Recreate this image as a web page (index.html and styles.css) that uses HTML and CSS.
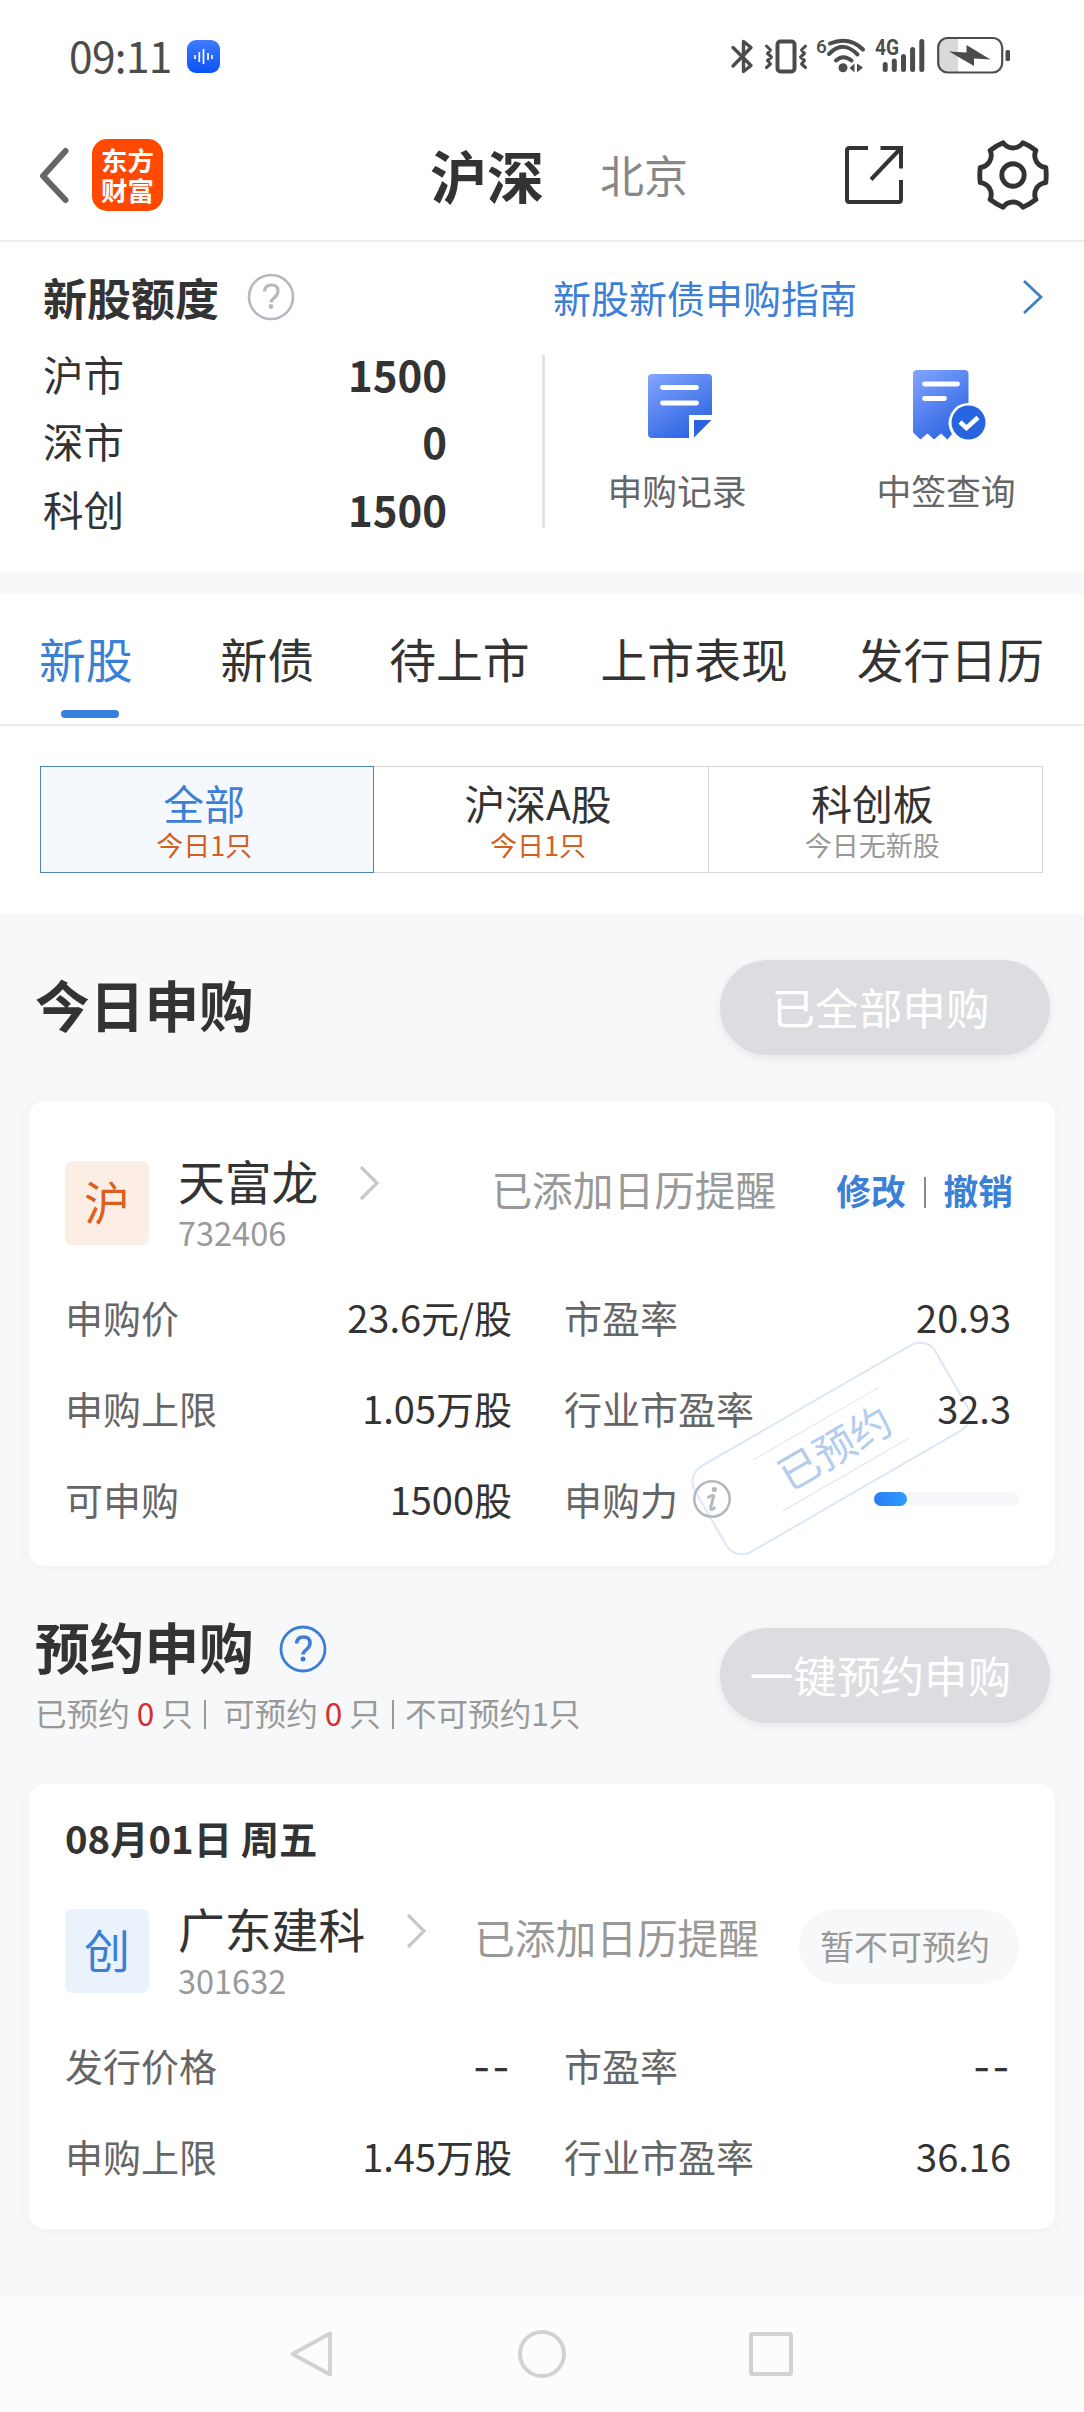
FILE: index.html
```html
<!DOCTYPE html>
<html lang="zh-CN">
<head>
<meta charset="UTF-8">
<title>新股申购</title>
<link rel="stylesheet" href="styles.css">
</head>
<body>
<div class="status-bar">
  <span class="time">09:11</span>
  <svg class="voice" width="33" height="33" viewBox="0 0 33 33">
    <defs><linearGradient id="voiceFill" x1="0" y1="0" x2="0" y2="1"><stop offset="0" stop-color="#3f7bff"/><stop offset="1" stop-color="#0a52f5"/></linearGradient></defs>
    <rect width="33" height="33" rx="9" fill="url(#voiceFill)"/>
    <path d="M8 15v4M12.300 12v10M16.500 9v15M21 13v7M25 15v4" stroke="#fff" stroke-width="1.700"/>
  </svg>
  <div class="status-icons">
    <svg width="24" height="40" viewBox="730 36 24 40"><path d="M733 47.500L751 65.500L743.500 71.500V41.500L751 47.500L733 66" fill="none" stroke="#4c4c4c" stroke-width="3.400" stroke-linejoin="round" stroke-linecap="round"/></svg>
    <svg class="vibrate" width="44" height="40" viewBox="764 36 44 40"><rect x="777.500" y="41.500" width="17" height="30" rx="3" fill="none" stroke="#4c4c4c" stroke-width="4"/><path d="M766.500 46l4 4-3 3.500 4 3.500-4 3.500 3 3.500-4 3.500M805.500 46l-4 4 3 3.500-4 3.500 4 3.500-3 3.500 4 3.500" fill="none" stroke="#4c4c4c" stroke-width="3" stroke-linejoin="round" stroke-linecap="round"/></svg>
    <svg class="wifi" width="50" height="40" viewBox="816 36 50 40"><text x="816" y="53" class="net-text six">6</text><path d="M830 43.500Q849 36 863 49.500M829 54Q843 39.500 857.500 54.500M836 60.500Q843 54 851.500 60.500" fill="none" stroke="#4c4c4c" stroke-width="4" stroke-linecap="round"/><circle cx="843" cy="67.800" r="4.500" fill="#4c4c4c"/><path d="M849.500 68l5-4.500v9zM863 67.500l-6-4v9z" fill="#4c4c4c"/></svg>
    <svg class="signal" width="50" height="40" viewBox="875 36 50 40"><text x="875" y="55" class="net-text" textLength="24" lengthAdjust="spacingAndGlyphs">4G</text><path d="M885.200 64.500v5M894.300 61v8.500M903.500 56.500v13M912.600 49.500v20M921.800 41.500v28" stroke="#4c4c4c" stroke-width="5" stroke-linecap="round"/></svg>
    <svg class="battery" width="74" height="40" viewBox="937 36 74 40"><path d="M958 38.500h-10q-9.500 0-9.500 10v14q0 10 9.500 10h10z" fill="#d9d9d9"/><rect x="938.200" y="38" width="64" height="34.500" rx="9.500" fill="none" stroke="#4c4c4c" stroke-width="2.200"/><rect x="1005.500" y="50" width="4.500" height="11" rx="1.500" fill="#4c4c4c"/><path d="M949 51.500l17.500 1V45L990.500 59.500 974 58.500V66z" fill="#4c4c4c"/></svg>
  </div>
</div>

<header class="header">
  <svg class="back" width="34" height="60" viewBox="0 0 34 60"><path d="M28.500 6L6 31L28.500 55" fill="none" stroke="#666" stroke-width="6" stroke-linejoin="round" stroke-linecap="round"/></svg>
  <div class="logo"><span>东方</span><span>财富</span></div>
  <div class="market on">沪深</div>
  <div class="market">北京</div>
  <svg class="share" width="60" height="62" viewBox="0 0 60 62"><path d="M24 4H5.500q-2.500 0-2.500 2.500V55.500q0 2.500 2.500 2.500H54.500q2.500 0 2.500-2.500V36M36.500 4H57V24.500M57 4L27 35.500" fill="none" stroke="#333" stroke-width="4"/></svg>
  <svg class="gear" width="76" height="76" viewBox="-39 -39 78 78"><path d="M33.600-7.800Q34.600 0 33.600 7.800C25 8.700 20 17.300 23.500 25.200Q17.200 30 10.100 33C5 26-5 26-10.100 33Q-17.200 30-23.500 25.200C-20 17.300-25 8.700-33.600 7.800Q-34.600 0-33.600-7.800C-25-8.700-20-17.300-23.500-25.200Q-17.200-30-10.100-33C-5-26 5-26 10.100-33Q17.200-30 23.500-25.200C20-17.300 25-8.700 33.600-7.800Z" fill="none" stroke="#333" stroke-width="5" stroke-linejoin="round"/><circle r="11.500" fill="none" stroke="#333" stroke-width="5"/></svg>
</header>

<section class="quota">
  <div class="quota-left">
    <div class="quota-title">新股额度
      <svg width="48" height="48" viewBox="0 0 48 48"><circle cx="24" cy="24" r="22" fill="none" stroke="#b5b9bf" stroke-width="2.600"/><path d="M17.500 18.500q.5-6.500 7-6.500t6.500 6q0 3.500-3.500 6.500t-3.500 5" fill="none" stroke="#b5b9bf" stroke-width="3.200"/><circle cx="24" cy="33.500" r="2.400" fill="#b5b9bf"/></svg>
    </div>
    <div class="quota-row"><span>沪市</span><b>1500</b></div>
    <div class="quota-row"><span>深市</span><b>0</b></div>
    <div class="quota-row"><span>科创</span><b>1500</b></div>
  </div>
  <div class="quota-right">
    <div class="guide"><span>新股新债申购指南</span>
      <svg width="22" height="36" viewBox="0 0 22 36"><path d="M2 2L19 18L2 34" fill="none" stroke="#3f7fc4" stroke-width="2.800"/></svg>
    </div>
    <div class="shortcuts">
      <div class="shortcut">
        <svg width="76" height="76" viewBox="0 0 76 76">
          <defs><linearGradient id="docFill" x1="0" y1="0" x2=".6" y2="1"><stop offset="0" stop-color="#84a5ff"/><stop offset="1" stop-color="#2e66e2"/></linearGradient></defs>
          <path d="M10 6H66q4 0 4 4V47H47V70H10q-4 0-4-4V10q0-4 4-4Z" fill="url(#docFill)"/>
          <path d="M52 52H69.500L52 69.500Z" fill="#2a63dd"/>
          <path d="M20.500 19.500H54.500M20.500 35H54.500" stroke="#fff" stroke-width="4.800" stroke-linecap="round"/>
        </svg>
        <span>申购记录</span>
      </div>
      <div class="shortcut">
        <svg width="76" height="76" viewBox="0 0 76 76">
          <path d="M6 2H53.500q4 0 4 4V35A20 20 0 0 0 41 66L36.500 71.500L30 65.500L23 71.500L16.500 65.500L9.500 71.500L2 64.500V6q0-4 4-4Z" fill="url(#docFill)"/>
          <circle cx="57.500" cy="54.500" r="17" fill="#2864e0"/>
          <path d="M13.500 16H46.500M13.500 30.500H33.500" stroke="#fff" stroke-width="4.800" stroke-linecap="round"/>
          <path d="M49 54l6.500 6L67 49.500" fill="none" stroke="#fff" stroke-width="4.500"/>
        </svg>
        <span>中签查询</span>
      </div>
    </div>
  </div>
</section>

<nav class="tabs">
  <span class="tab active">新股</span><span class="tab">新债</span><span class="tab">待上市</span><span class="tab">上市表现</span><span class="tab">发行日历</span>
</nav>

<section class="filter">
  <div class="segment active"><strong>全部</strong><small>今日1只</small></div>
  <div class="segment"><strong>沪深A股</strong><small>今日1只</small></div>
  <div class="segment"><strong>科创板</strong><small class="none">今日无新股</small></div>
</section>

<main>
  <div class="section-head today">
    <h2>今日申购</h2>
    <div class="pill">已全部申购</div>
  </div>

  <article class="card first">
    <div class="stock">
      <div class="badge sh">沪</div>
      <div class="stock-id">
        <div class="stock-name">天富龙<svg width="22" height="36" viewBox="0 0 22 36"><path d="M2 2L18 18L2 34" fill="none" stroke="#c8c8c8" stroke-width="3.200"/></svg></div>
        <div class="code">732406</div>
      </div>
      <div class="remind">已添加日历提醒</div>
      <div class="actions"><b>修改</b><i></i><b>撤销</b></div>
    </div>
    <div class="stamp"><span>已预约</span></div>
    <div class="facts">
      <span>申购价</span><em>23.6元/股</em><span>市盈率</span><em>20.93</em>
      <span>申购上限</span><em>1.05万股</em><span>行业市盈率</span><em>32.3</em>
      <span>可申购</span><em>1500股</em>
      <span class="power">申购力
        <svg width="40" height="40" viewBox="0 0 40 40"><circle cx="20" cy="20" r="17.700" fill="none" stroke="#b5b9bf" stroke-width="2.600"/><circle cx="22.300" cy="10.500" r="2.600" fill="#b5b9bf"/><path d="M15.500 19q4-3 5.500-2.500t0 3l-2 7.500q-.8 3.500.6 3.500t3.600-2.500" fill="none" stroke="#b5b9bf" stroke-width="3"/></svg>
      </span>
      <div class="meter"><div class="meter-fill" style="width:23%"></div></div>
    </div>
  </article>

  <div class="section-head booking">
    <div>
      <h2>预约申购
        <svg width="48" height="48" viewBox="0 0 48 48"><circle cx="24" cy="24" r="22" fill="none" stroke="#3c7fd6" stroke-width="2.800"/><path d="M17.500 18.500q.5-6.500 7-6.500t6.500 6q0 3.500-3.500 6.500t-3.500 5" fill="none" stroke="#3c7fd6" stroke-width="3.600"/><circle cx="24" cy="34" r="2.500" fill="#3c7fd6"/></svg>
      </h2>
      <p class="counts"><span>已预约</span><b>0</b><span>只</span><i></i><span>可预约</span><b>0</b><span>只</span><i class="tight"></i><span>不可预约1只</span></p>
    </div>
    <div class="pill">一键预约申购</div>
  </div>

  <article class="card second">
    <div class="date">08月01日 周五</div>
    <div class="stock">
      <div class="badge cy">创</div>
      <div class="stock-id">
        <div class="stock-name">广东建科<svg width="22" height="36" viewBox="0 0 22 36"><path d="M2 2L18 18L2 34" fill="none" stroke="#c8c8c8" stroke-width="3.200"/></svg></div>
        <div class="code">301632</div>
      </div>
      <div class="remind">已添加日历提醒</div>
      <div class="disabled">暂不可预约</div>
    </div>
    <div class="facts">
      <span>发行价格</span><em class="empty">--</em><span>市盈率</span><em class="empty">--</em>
      <span>申购上限</span><em>1.45万股</em><span>行业市盈率</span><em>36.16</em>
    </div>
  </article>
</main>

<footer class="system-nav">
  <svg width="50" height="50" viewBox="0 0 50 50"><path d="M42 4.500V45.500L4.500 25Z" fill="none" stroke="#d2d2d2" stroke-width="4" stroke-linejoin="round"/></svg>
  <svg width="50" height="50" viewBox="0 0 50 50"><circle cx="25" cy="25" r="22" fill="none" stroke="#d2d2d2" stroke-width="4"/></svg>
  <svg width="50" height="50" viewBox="0 0 50 50"><rect x="5" y="5" width="40" height="40" rx="1.500" fill="none" stroke="#d2d2d2" stroke-width="4"/></svg>
</footer>
</body>
</html>
```
FILE: styles.css
```css
* { box-sizing: border-box; }
body {
  margin: 0;
  width: 1084px;
  height: 2412px;
  background: #fff;
  color: #333;
  font-family: "Noto Sans CJK SC", "Noto Sans", sans-serif;
  overflow: hidden;
}
svg { display: block; flex: none; overflow: visible; }
em, i { font-style: normal; }

.status-bar { height: 112px; display: flex; align-items: flex-start; padding: 36px 73px 0 69px; }
.time { font-size: 42.500px; line-height: 38px; height: 40px; width: 102px; color: #4c4c4c; letter-spacing: -0.700px; }
.voice { margin: 4px 0 0 16px; }
.status-icons { display: flex; margin-left: auto; }
.vibrate { margin-left: 10px; }
.wifi { margin-left: 8px; }
.signal { margin-left: 9px; }
.battery { margin-left: 12px; }
.net-text { font: 700 22px "Roboto", sans-serif; fill: #4c4c4c; }
.net-text.six { font-size: 19px; font-weight: 500; }

.header { height: 130px; display: flex; align-items: center; padding: 0 33px 2px 37px; border-bottom: 2px solid #ededed; }
.logo {
  width: 71px; height: 72px; margin: 0 0 0 21px; border-radius: 15px; background: #ff4800;
  display: flex; flex-direction: column; align-items: center; justify-content: center;
  color: #fff; font-weight: 700; font-size: 26.500px; line-height: 30px;
}
.market { font-size: 44px; line-height: 60px; height: 62px; color: #888; margin-left: 56px; }
.market.on { font-size: 57px; font-weight: 700; color: #333; margin-left: 267px; }
.share { margin-left: auto; }
.gear { margin-left: 71px; }

.quota { height: 330px; display: grid; grid-template-columns: 542px 542px; }
.quota-left { padding: 21px 95px 0 43px; }
.quota-title { display: flex; align-items: center; gap: 28px; height: 68px; font-size: 44px; font-weight: 700; line-height: 64px; margin-bottom: 9px; }
.quota-row { display: flex; align-items: center; justify-content: space-between; height: 67.500px; font-size: 40.500px; line-height: 60px; }
.quota-row b { font-size: 42px; }
.guide { height: 113px; padding: 0 40px 3px 11px; display: flex; align-items: center; justify-content: space-between; color: #3c7fd6; font-size: 38px; line-height: 56px; }
.shortcuts { height: 173px; border-left: 3px solid #e3e3e3; display: flex; padding-left: 21px; }
.shortcut { width: 222px; padding-top: 13px; display: flex; flex-direction: column; align-items: center; font-size: 34.800px; line-height: 50px; color: #666; }
.shortcut svg { margin-left: 5px; }
.shortcut + .shortcut { margin-left: 47px; }
.shortcut span { margin-top: 21px; }

.tabs { height: 154px; border-top: 22px solid #f7f8fa; border-bottom: 2px solid #ededed; display: flex; padding-left: 39px; font-size: 46.800px; line-height: 128px; }
.tab.active { color: #3c7fd6; display: flex; flex-direction: column; align-items: center; }
.tab.active::after { content: ""; width: 58px; height: 8px; margin: -12px 0 0 9px; border-radius: 4px; background: #3880de; }
.tab:nth-child(2) { margin-left: 88px; }
.tab:nth-child(3) { margin-left: 75px; }
.tab:nth-child(4) { margin-left: 71px; }
.tab:nth-child(5) { margin-left: 69px; }

.filter { height: 188px; padding: 40px 41px 41px 40px; display: grid; grid-template-columns: repeat(3, 1fr); }
.segment { border: 1px solid #d6d6d6; border-left: 0; display: flex; flex-direction: column; align-items: center; padding: 11px 6px 0 0; }
.segment strong { font-weight: 400; font-size: 40.800px; line-height: 50px; }
.segment small { font-size: 27px; line-height: 32px; margin-top: 1px; color: #d45f1e; }
.segment small.none { color: #999; }
.segment.active { border: 1px solid #4a86b8; background: #f5f9fe; }
.segment.active strong { color: #3c7fd6; }

main { height: 1382px; background: #f7f8fa; padding: 0 29px; }
.section-head { display: flex; align-items: flex-start; justify-content: space-between; padding: 0 5px 0 6px; }
.section-head.today { height: 187px; padding-top: 46px; }
.section-head.booking { height: 218px; padding-top: 62px; }
h2 { margin: 0; display: flex; align-items: center; gap: 26px; font-size: 54.700px; line-height: 88px; font-weight: 700; }
.booking h2 { line-height: 48px; height: 48px; margin-top: -6px; }
.booking h2 svg { margin: 5px 0 0 -1px; }
.pill { width: 330px; height: 95px; border-radius: 48px; background: #dcdde1; color: #fff; text-align: center; font-size: 43.600px; line-height: 92px; padding-right: 9px; box-shadow: 0 3px 10px rgba(0, 0, 0, .07); }
.counts { margin: 19px 0 0; display: flex; align-items: center; color: #999; font-size: 31.600px; line-height: 46px; }
.counts b { font-weight: 400; color: #d43030; margin: 0 7px; }
.counts i { width: 2px; height: 29px; background: #999; margin: 4px 17px 0 11px; }
.counts i.tight { margin-right: 11px; }

.card { background: #fff; border-radius: 15px; box-shadow: 0 2px 14px rgba(0, 0, 0, .035); position: relative; }
.card.first { height: 465px; padding: 53px 36px 0; }
.card.second { height: 445px; padding: 24px 36px 0; }
.date { font-size: 38.300px; line-height: 60px; font-weight: 700; margin-bottom: 34px; }
.stock { display: flex; height: 117px; }
.badge { width: 84px; height: 84px; margin-top: 7px; border-radius: 7px; font-size: 46px; line-height: 78px; text-align: center; }
.badge.sh { background: #fceee5; color: #d9601f; }
.badge.cy { background: #eaf3fc; color: #3c7fd6; }
.stock-id { margin-left: 29px; }
.stock-name { display: flex; align-items: center; gap: 41px; font-size: 46.800px; line-height: 52px; height: 52px; }
.stock-name svg { margin-top: 5px; }
.code { font-size: 32.500px; line-height: 48px; margin-top: 2px; color: #999; }
.remind { margin: 8px 0 0 auto; font-size: 40.700px; line-height: 54px; color: #999; }
.actions { display: flex; align-items: center; height: 60px; margin: 6px 6px 0 60px; font-size: 34.700px; color: #3c7fd6; line-height: 54px; }
.actions i { width: 2px; height: 31px; margin: 4px 18px 0; background: #888; }
.disabled { width: 220px; height: 75px; margin: 7px 0 0 40px; border-radius: 38px; background: #f7f8fa; color: #999; font-size: 34px; line-height: 73px; padding-right: 8px; text-align: center; }
.facts { display: grid; grid-template-columns: 222px 225px 52px 169px 286px; grid-auto-rows: 91.300px; align-items: center; font-size: 38px; line-height: 56px; color: #666; position: relative; }
.facts > span { white-space: nowrap; }
.facts > :nth-child(4n+3) { grid-column: 4; }
.facts em { color: #333; text-align: right; }
.facts em:nth-child(4n) { padding-right: 8px; }
.facts em.empty { font-size: 47px; letter-spacing: 3px; padding: 0 0 4px; }
.facts em.empty:nth-child(4n) { padding-right: 7px; }
.power { display: flex; align-items: center; gap: 14px; }
.meter { width: 145px; height: 14px; border-radius: 7px; background: #f5f7fa; justify-self: end; }
.meter-fill { height: 14px; border-radius: 7px; background: linear-gradient(90deg, #2b7bf3, #2d9dff); }

/* rotated seal laid across the figures */
.stamp { position: absolute; left: 662px; top: 297px; width: 280px; height: 101px; border: 2px solid #dbe7f6; border-radius: 19px; transform: rotate(-30deg); display: flex; align-items: center; justify-content: center; }
.stamp span { width: 145px; height: 60px; margin-right: 2px; border-top: 1px solid #dbe7f6; border-bottom: 1px solid #dbe7f6; color: #b3cdef; font-size: 41px; line-height: 54px; padding-left: 9px; text-align: center; }

.system-nav { height: 116px; background: #fcfcfc; display: flex; justify-content: center; align-items: center; gap: 179px; }
```
